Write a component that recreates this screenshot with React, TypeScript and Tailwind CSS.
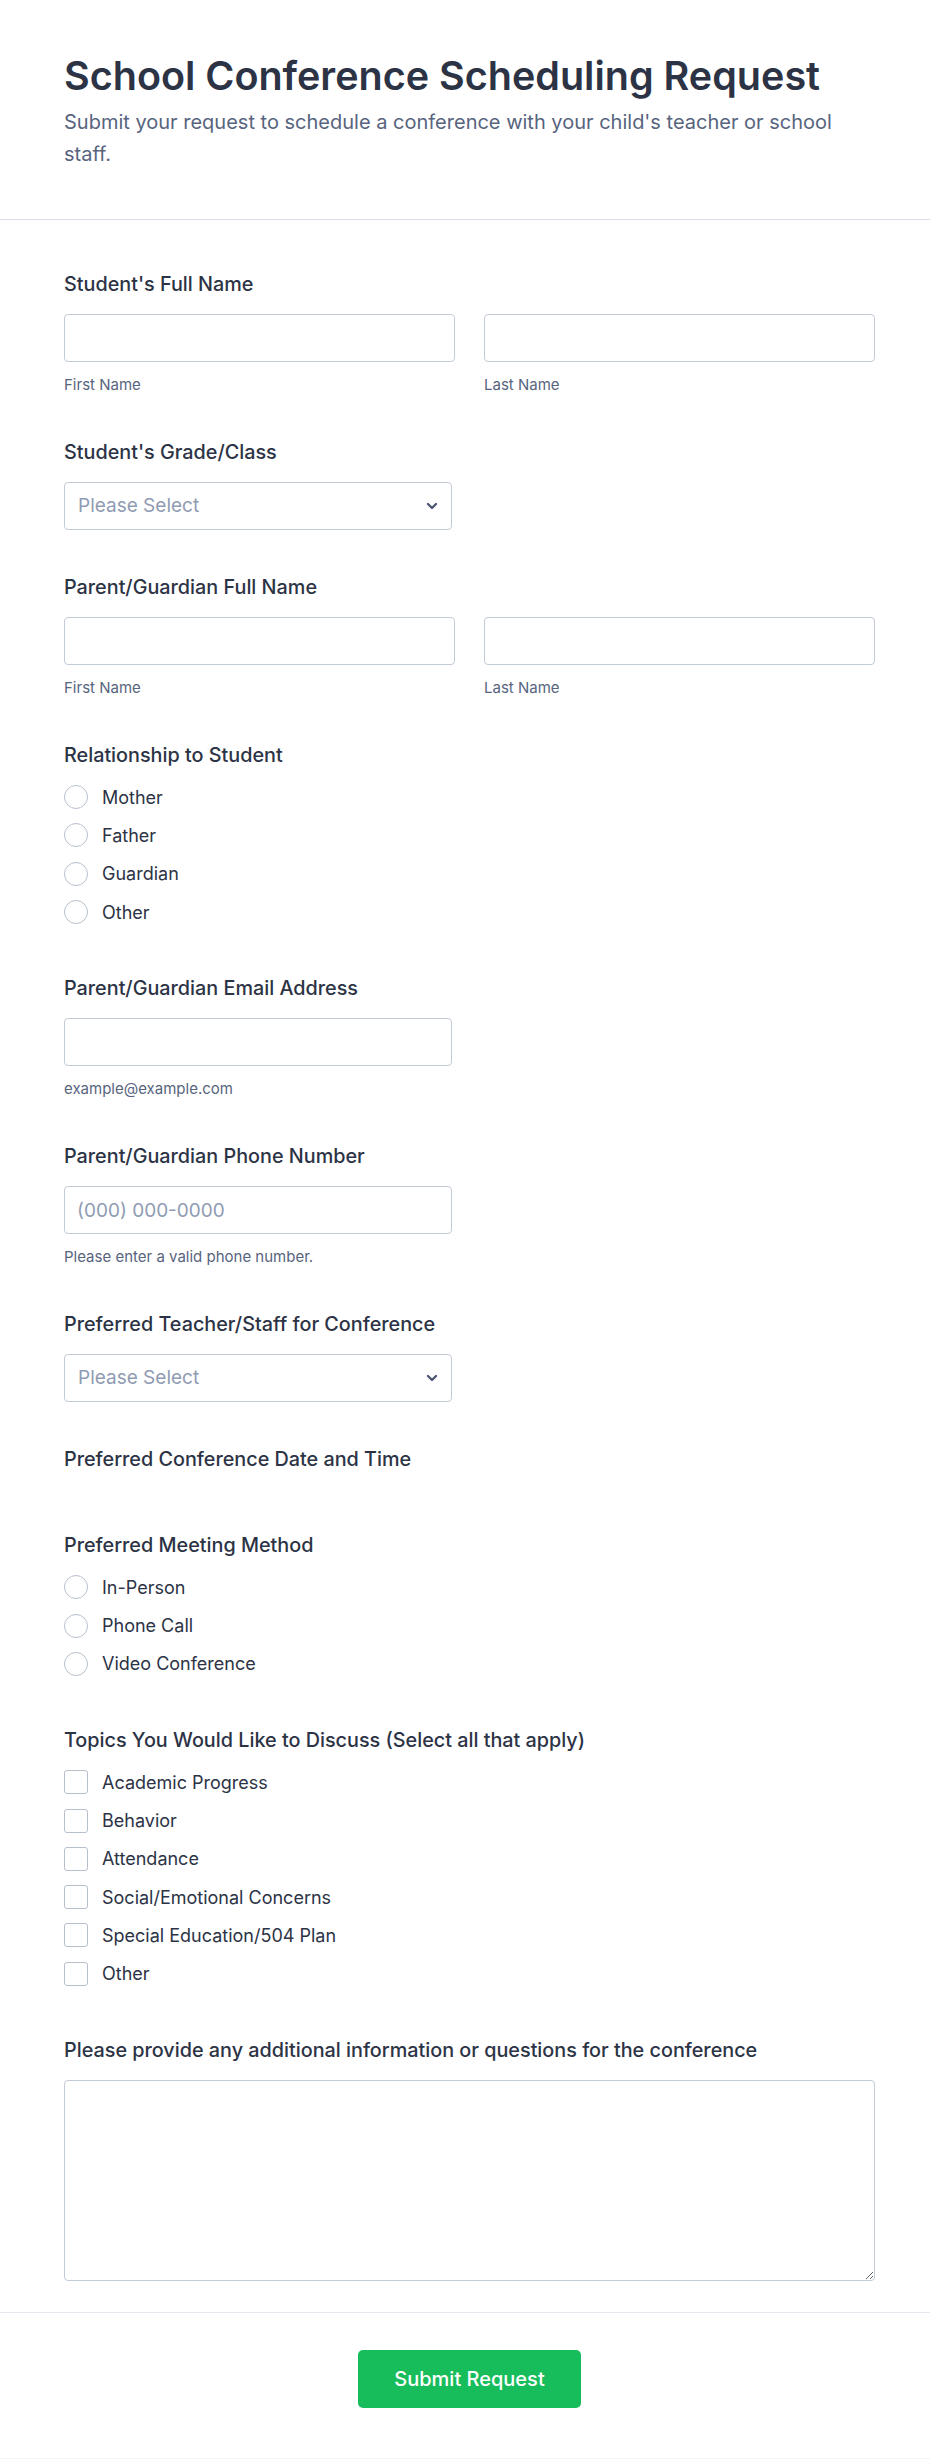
import React from "react";

const labelCls = "block h-7 text-[19.8px] leading-7 font-medium text-[#2c3345]";
const inputCls =
  "block w-full h-12 rounded-[4px] border border-[#c3cad8] bg-white px-3 text-[19px] text-[#2c3345] placeholder:text-[#8f9bb3] outline-none";
const subCls = "block mt-[13px] h-5 text-[15px] leading-5 text-[#57647e]";

function Label({ children }: { children: React.ReactNode }) {
  return <div className={labelCls}>{children}</div>;
}

function Chevron() {
  return (
    <svg width="14" height="14" viewBox="0 0 14 14" fill="none" className="absolute right-[12px] top-1/2 -translate-y-1/2">
      <path d="M3 5l4 4 4-4" stroke="#4e5a73" strokeWidth="2.4" strokeLinecap="round" strokeLinejoin="round" />
    </svg>
  );
}

function SelectBox() {
  return (
    <div className="relative w-[388px] h-12 rounded-[4px] border border-[#c3cad8] bg-white flex items-center pl-[13px]">
      <span className="text-[19px] text-[#8f9bb3]">Please Select</span>
      <Chevron />
    </div>
  );
}

function NamePair() {
  return (
    <div className="grid grid-cols-2 gap-[29px]">
      <div>
        <input className={inputCls} />
        <span className={subCls}>First Name</span>
      </div>
      <div>
        <input className={inputCls} />
        <span className={subCls}>Last Name</span>
      </div>
    </div>
  );
}

function Options({ items, square }: { items: string[]; square?: boolean }) {
  return (
    <div className="mt-[9px] flex flex-col">
      {items.map((t) => (
        <label key={t} className="flex items-center h-[38.3px] gap-[14px]">
          <span
            className={
              square
                ? "w-6 h-6 rounded-[3px] border border-[#b8bfcc] bg-white shrink-0"
                : "w-6 h-6 rounded-full border border-[#b8bfcc] bg-white shrink-0"
            }
          />
          <span className="text-[18px] text-[#2c3345]">{t}</span>
        </label>
      ))}
    </div>
  );
}

export default function App() {
  return (
    <div className="min-h-[2459px] bg-white" style={{ fontFamily: "Inter, 'Noto Sans', sans-serif" }}>
      <header className="pl-16 pr-[55px] pt-14 pb-[49px] border-b border-[#dcdee8]">
        <h1 className="text-[39.5px] leading-10 font-semibold text-[#2c3345]">School Conference Scheduling Request</h1>
        <p className="mt-[10px] text-[20px] leading-8 text-[#57647e]">
          Submit your request to schedule a conference with your child's teacher or school staff.
        </p>
      </header>

      <main className="pl-16 pr-[55px] pt-[50px] pb-[31px] border-b border-[#e6e8ef] flex flex-col gap-[43px]">
        <section>
          <Label>Student's Full Name</Label>
          <div className="mt-4">
            <NamePair />
          </div>
        </section>

        <section>
          <Label>Student's Grade/Class</Label>
          <div className="mt-4">
            <SelectBox />
          </div>
        </section>

        <section>
          <Label>Parent/Guardian Full Name</Label>
          <div className="mt-4">
            <NamePair />
          </div>
        </section>

        <section>
          <Label>Relationship to Student</Label>
          <Options items={["Mother", "Father", "Guardian", "Other"]} />
        </section>

        <section>
          <Label>Parent/Guardian Email Address</Label>
          <div className="mt-4 w-[388px]">
            <input className={inputCls} type="email" />
            <span className={subCls}>example@example.com</span>
          </div>
        </section>

        <section>
          <Label>Parent/Guardian Phone Number</Label>
          <div className="mt-4 w-[388px]">
            <input className={inputCls} placeholder="(000) 000-0000" />
            <span className={subCls}>Please enter a valid phone number.</span>
          </div>
        </section>

        <section>
          <Label>Preferred Teacher/Staff for Conference</Label>
          <div className="mt-4">
            <SelectBox />
          </div>
        </section>

        <section className="pb-[15px]">
          <Label>Preferred Conference Date and Time</Label>
        </section>

        <section>
          <Label>Preferred Meeting Method</Label>
          <Options items={["In-Person", "Phone Call", "Video Conference"]} />
        </section>

        <section>
          <Label>Topics You Would Like to Discuss (Select all that apply)</Label>
          <Options
            square
            items={[
              "Academic Progress",
              "Behavior",
              "Attendance",
              "Social/Emotional Concerns",
              "Special Education/504 Plan",
              "Other",
            ]}
          />
        </section>

        <section>
          <Label>Please provide any additional information or questions for the conference</Label>
          <textarea className="mt-4 block w-full h-[201px] rounded-[4px] border border-[#c3cad8] bg-white p-3 outline-none" />
        </section>
      </main>

      <footer className="flex justify-center pl-16 pr-[55px] pt-[37px] pb-[50px] border-b border-[#f3f4f7]">
        <button className="w-[223px] h-[58px] rounded-[5px] bg-[#18bd5b] text-white text-[20px] font-medium">
          Submit Request
        </button>
      </footer>
    </div>
  );
}
